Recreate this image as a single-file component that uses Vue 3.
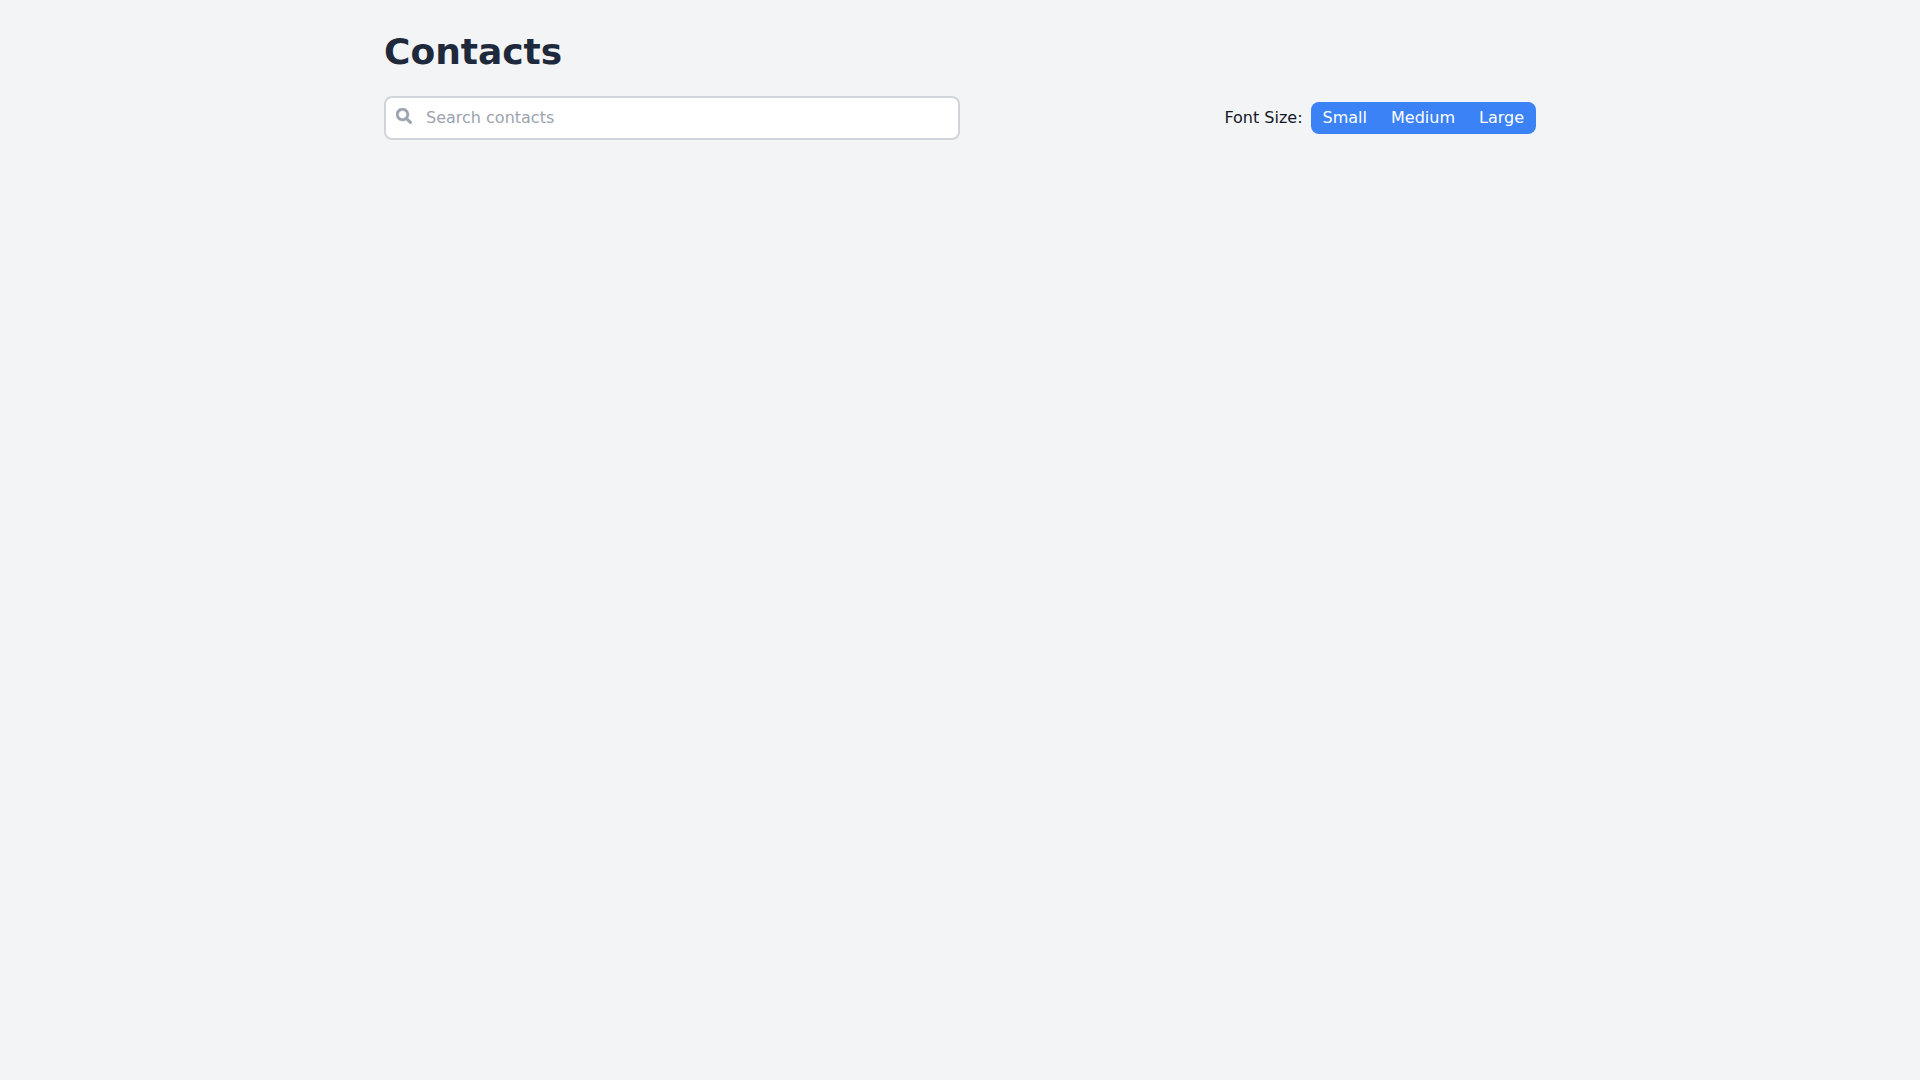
<script setup>
import { ref } from 'vue'

const query = ref('')
const sizes = ['Small', 'Medium', 'Large']
</script>

<template>
  <div class="page">
    <h1 class="title">Contacts</h1>
    <div class="toolbar">
      <div class="search">
        <svg class="search-icon" viewBox="0 0 512 512" aria-hidden="true">
          <path fill="currentColor" stroke="currentColor" stroke-width="14" d="M505 442.700 405.300 343c-4.500-4.500-10.600-7-17-7H372c27.600-35.300 44-79.700 44-128C416 93.100 322.900 0 208 0S0 93.100 0 208s93.100 208 208 208c48.300 0 92.700-16.400 128-44v16.300c0 6.400 2.500 12.500 7 17l99.700 99.700c9.400 9.400 24.600 9.400 33.900 0l28.300-28.300c9.400-9.400 9.400-24.600.1-34zM208 336c-70.700 0-128-57.200-128-128 0-70.700 57.200-128 128-128 70.700 0 128 57.200 128 128 0 70.700-57.200 128-128 128z" />
        </svg>
        <input v-model="query" class="search-input" type="text" placeholder="Search contacts" />
      </div>
      <div class="font-size">
        <span class="font-label">Font Size:</span>
        <div class="size-group">
          <button v-for="size in sizes" :key="size" class="size-btn" type="button">{{ size }}</button>
        </div>
      </div>
    </div>
  </div>
</template>

<style>
html,
body {
  margin: 0;
  background: #f3f4f6;
}
</style>

<style scoped>
.page {
  box-sizing: border-box;
  width: 1152px;
  min-height: 1080px;
  margin: 0 auto;
  padding-top: 32px;
  font-family: "DejaVu Sans", sans-serif;
}

.title {
  margin: 0 0 24px;
  font-size: 36px;
  line-height: 40px;
  font-weight: 700;
  color: #1e293b;
}

.toolbar {
  display: flex;
  align-items: center;
  justify-content: space-between;
}

.search {
  position: relative;
  width: 50%;
}

.search-icon {
  position: absolute;
  left: 12px;
  top: 12px;
  width: 16px;
  height: 16px;
  color: #9ca3af;
}

.search-input {
  display: block;
  box-sizing: border-box;
  width: 100%;
  height: 44px;
  padding: 7px 16px 9px 40px;
  border: 2px solid #d1d5db;
  border-radius: 8px;
  background: #fff;
  font-family: inherit;
  font-size: 16px;
  line-height: 24px;
  color: #1f2937;
  outline: none;
}

.search-input::placeholder {
  color: #9ca3af;
  opacity: 1;
}

.font-size {
  display: flex;
  align-items: center;
  gap: 8px;
}

.font-label {
  font-size: 16px;
  line-height: 24px;
  color: #111827;
}

.size-group {
  display: flex;
  border-radius: 8px;
  background: #3b82f6;
  overflow: hidden;
}

.size-btn {
  height: 32px;
  padding: 0 12px;
  border: 0;
  background: transparent;
  font-family: inherit;
  font-size: 16px;
  line-height: 24px;
  color: #fff;
  cursor: pointer;
}
</style>
